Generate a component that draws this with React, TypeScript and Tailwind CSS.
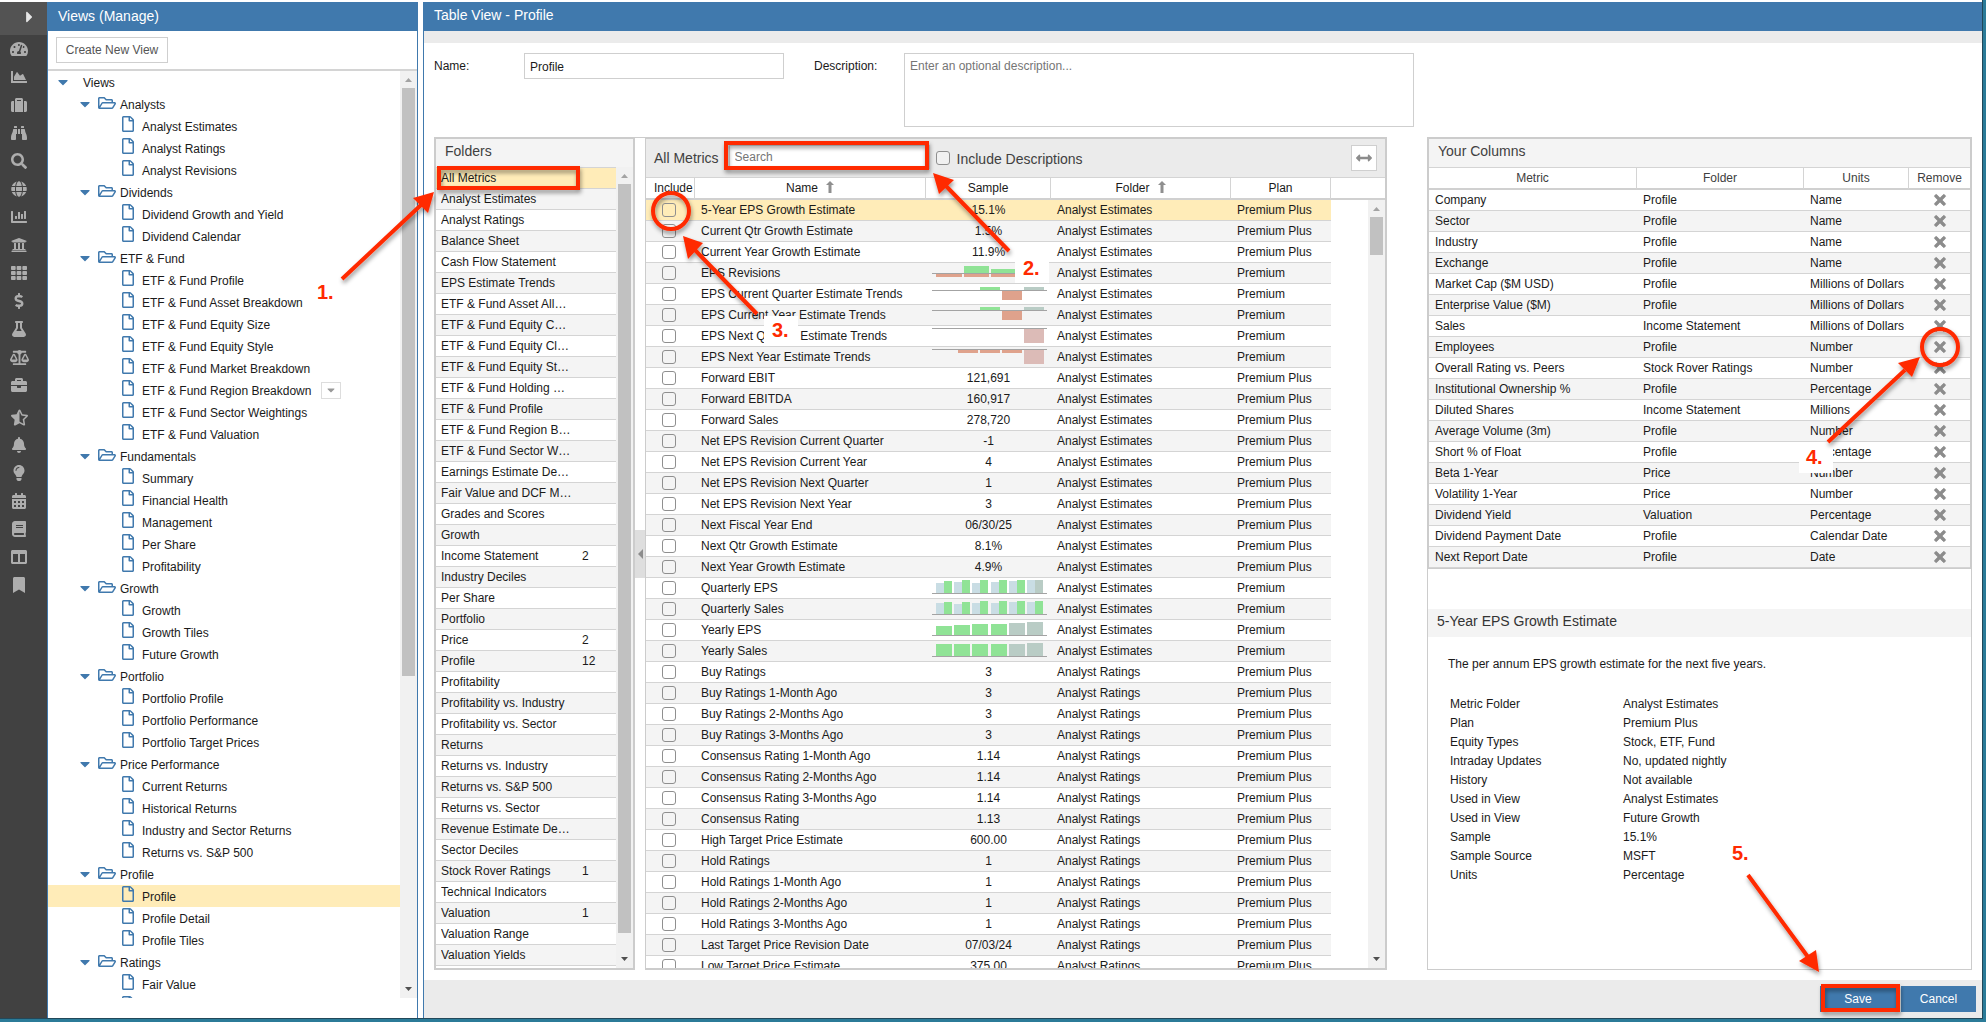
import { useState } from "react";
import type { ReactNode } from "react";
import {
    FaTachometerAlt,
    FaChartArea,
    FaSuitcase,
    FaBinoculars,
    FaSearch,
    FaGlobe,
    FaChartBar,
    FaUniversity,
    FaTh,
    FaDollarSign,
    FaFlask,
    FaBalanceScale,
    FaBriefcase,
    FaStarHalfAlt,
    FaBell,
    FaLightbulb,
    FaCalendarAlt,
    FaBook,
    FaColumns,
    FaBookmark,
    FaRegFolderOpen,
    FaRegFile,
    FaTimes,
    FaArrowsAltH,
    FaCaretDown,
    FaCaretRight,
} from "react-icons/fa";

const railIcons = [
    { label: "Dashboard", icon: <FaTachometerAlt size={18} /> },
    { label: "Chart", icon: <FaChartArea /> },
    { label: "Portfolios", icon: <FaSuitcase /> },
    { label: "Watchlists", icon: <FaBinoculars /> },
    { label: "Screeners", icon: <FaSearch /> },
    { label: "Markets", icon: <FaGlobe /> },
    { label: "Performance", icon: <FaChartBar /> },
    { label: "Institutions", icon: <FaUniversity /> },
    { label: "Grid", icon: <FaTh /> },
    { label: "Trading", icon: <FaDollarSign /> },
    { label: "Research", icon: <FaFlask /> },
    { label: "Rebalance", icon: <FaBalanceScale size={19} /> },
    { label: "Brokerage", icon: <FaBriefcase /> },
];

const railIconsLower = [
    { label: "Ratings", icon: <FaStarHalfAlt size={17} /> },
    { label: "Alerts", icon: <FaBell /> },
    { label: "Ideas", icon: <FaLightbulb /> },
    { label: "Calendar", icon: <FaCalendarAlt /> },
    { label: "Library", icon: <FaBook /> },
    { label: "Views", icon: <FaColumns /> },
    { label: "Bookmarks", icon: <FaBookmark /> },
];

const viewTree = [
    { name: "Analysts", views: ["Analyst Estimates", "Analyst Ratings", "Analyst Revisions"] },
    { name: "Dividends", views: ["Dividend Growth and Yield", "Dividend Calendar"] },
    {
        name: "ETF & Fund",
        views: [
            "ETF & Fund Profile",
            "ETF & Fund Asset Breakdown",
            "ETF & Fund Equity Size",
            "ETF & Fund Equity Style",
            "ETF & Fund Market Breakdown",
            "ETF & Fund Region Breakdown",
            "ETF & Fund Sector Weightings",
            "ETF & Fund Valuation",
        ],
    },
    { name: "Fundamentals", views: ["Summary", "Financial Health", "Management", "Per Share", "Profitability"] },
    { name: "Growth", views: ["Growth", "Growth Tiles", "Future Growth"] },
    { name: "Portfolio", views: ["Portfolio Profile", "Portfolio Performance", "Portfolio Target Prices"] },
    {
        name: "Price Performance",
        views: ["Current Returns", "Historical Returns", "Industry and Sector Returns", "Returns vs. S&P 500"],
    },
    { name: "Profile", views: ["Profile", "Profile Detail", "Profile Tiles"] },
    { name: "Ratings", views: ["Fair Value", ""] },
];

const folders: [string, number?][] = [
    ["All Metrics"],
    ["Analyst Estimates"],
    ["Analyst Ratings"],
    ["Balance Sheet"],
    ["Cash Flow Statement"],
    ["EPS Estimate Trends"],
    ["ETF & Fund Asset All…"],
    ["ETF & Fund Equity C…"],
    ["ETF & Fund Equity Cl…"],
    ["ETF & Fund Equity St…"],
    ["ETF & Fund Holding …"],
    ["ETF & Fund Profile"],
    ["ETF & Fund Region B…"],
    ["ETF & Fund Sector W…"],
    ["Earnings Estimate De…"],
    ["Fair Value and DCF M…"],
    ["Grades and Scores"],
    ["Growth"],
    ["Income Statement", 2],
    ["Industry Deciles"],
    ["Per Share"],
    ["Portfolio"],
    ["Price", 2],
    ["Profile", 12],
    ["Profitability"],
    ["Profitability vs. Industry"],
    ["Profitability vs. Sector"],
    ["Returns"],
    ["Returns vs. Industry"],
    ["Returns vs. S&P 500"],
    ["Returns vs. Sector"],
    ["Revenue Estimate De…"],
    ["Sector Deciles"],
    ["Stock Rover Ratings", 1],
    ["Technical Indicators"],
    ["Valuation", 1],
    ["Valuation Range"],
    ["Valuation Yields"],
];

const GREEN = "#90e396";
const BLUE = "#c9dde4";
const GREY = "#b9ccc5";
const ORANGE = "#dfa28c";
const PINK = "#dcbbb7";

// x, width, height (negative hangs below the axis), fill
type Bar = [number, number, number, string];

interface Spark {
    axis: number;
    bars: Bar[];
}

const pairX = [4, 22, 40, 59, 77, 95];

function pairs(left: number[], right: number[], lastFill: string): Bar[] {
    return pairX.flatMap((x, i): Bar[] => [
        [x, 8, left[i], BLUE],
        [x + 8, 8, right[i], i === 5 ? lastFill : GREEN],
    ]);
}

function years(heights: number[]): Bar[] {
    return heights.map((h, i): Bar => [pairX[i], 16, h, i > 3 ? GREY : GREEN]);
}

const sparks: Record<string, Spark> = {
    revisions: {
        axis: 10,
        bars: [
            [4, 26, -3, ORANGE],
            [32, 25, 7, GREEN],
            [32, 25, -3, ORANGE],
            [59, 25, 4, GREEN],
            [59, 25, -3, ORANGE],
        ],
    },
    quarterTrend: { axis: 6, bars: [[48, 20, 3, GREEN], [70, 20, -9, ORANGE], [92, 20, 3, GREY]] },
    yearTrend: { axis: 5, bars: [[48, 20, 3, GREEN], [70, 20, -9, ORANGE], [92, 20, 3, GREY]] },
    nextQuarter: { axis: 2, bars: [[92, 20, -14, PINK]] },
    nextYear: {
        axis: 2,
        bars: [[26, 20, -3, ORANGE], [48, 20, -3, ORANGE], [70, 20, -3, ORANGE], [92, 20, -14, PINK]],
    },
    quarterlyEps: { axis: 15, bars: pairs([10, 11, 10, 11, 12, 13], [12, 13, 13, 13, 13, 13], GREY) },
    quarterlySales: { axis: 15, bars: pairs([11, 10, 11, 11, 12, 12], [12, 12, 13, 13, 13, 13], GREEN) },
    yearlyEps: { axis: 15, bars: years([9, 10, 11, 11, 12, 13]) },
    yearlySales: { axis: 15, bars: years([12, 12, 12, 12, 12, 13]) },
};

interface Metric {
    name: string;
    sample?: string;
    spark?: string;
    folder: string;
    plan: string;
}

const est = (name: string, sample: string): Metric => ({ name, sample, folder: "Analyst Estimates", plan: "Premium Plus" });
const trend = (name: string, spark: string): Metric => ({ name, spark, folder: "Analyst Estimates", plan: "Premium" });
const rating = (name: string, sample: string): Metric => ({ name, sample, folder: "Analyst Ratings", plan: "Premium Plus" });

const metrics: Metric[] = [
    est("5-Year EPS Growth Estimate", "15.1%"),
    est("Current Qtr Growth Estimate", "1.5%"),
    est("Current Year Growth Estimate", "11.9%"),
    trend("EPS Revisions", "revisions"),
    trend("EPS Current Quarter Estimate Trends", "quarterTrend"),
    trend("EPS Current Year Estimate Trends", "yearTrend"),
    trend("EPS Next Quarter Estimate Trends", "nextQuarter"),
    trend("EPS Next Year Estimate Trends", "nextYear"),
    est("Forward EBIT", "121,691"),
    est("Forward EBITDA", "160,917"),
    est("Forward Sales", "278,720"),
    est("Net EPS Revision Current Quarter", "-1"),
    est("Net EPS Revision Current Year", "4"),
    est("Net EPS Revision Next Quarter", "1"),
    est("Net EPS Revision Next Year", "3"),
    est("Next Fiscal Year End", "06/30/25"),
    est("Next Qtr Growth Estimate", "8.1%"),
    est("Next Year Growth Estimate", "4.9%"),
    trend("Quarterly EPS", "quarterlyEps"),
    trend("Quarterly Sales", "quarterlySales"),
    trend("Yearly EPS", "yearlyEps"),
    trend("Yearly Sales", "yearlySales"),
    rating("Buy Ratings", "3"),
    rating("Buy Ratings 1-Month Ago", "3"),
    rating("Buy Ratings 2-Months Ago", "3"),
    rating("Buy Ratings 3-Months Ago", "3"),
    rating("Consensus Rating 1-Month Ago", "1.14"),
    rating("Consensus Rating 2-Months Ago", "1.14"),
    rating("Consensus Rating 3-Months Ago", "1.14"),
    rating("Consensus Rating", "1.13"),
    rating("High Target Price Estimate", "600.00"),
    rating("Hold Ratings", "1"),
    rating("Hold Ratings 1-Month Ago", "1"),
    rating("Hold Ratings 2-Months Ago", "1"),
    rating("Hold Ratings 3-Months Ago", "1"),
    rating("Last Target Price Revision Date", "07/03/24"),
    rating("Low Target Price Estimate", "375.00"),
];

const yourColumns = [
    ["Company", "Profile", "Name"],
    ["Sector", "Profile", "Name"],
    ["Industry", "Profile", "Name"],
    ["Exchange", "Profile", "Name"],
    ["Market Cap ($M USD)", "Profile", "Millions of Dollars"],
    ["Enterprise Value ($M)", "Profile", "Millions of Dollars"],
    ["Sales", "Income Statement", "Millions of Dollars"],
    ["Employees", "Profile", "Number"],
    ["Overall Rating vs. Peers", "Stock Rover Ratings", "Number"],
    ["Institutional Ownership %", "Profile", "Percentage"],
    ["Diluted Shares", "Income Statement", "Millions"],
    ["Average Volume (3m)", "Profile", "Number"],
    ["Short % of Float", "Profile", "Percentage"],
    ["Beta 1-Year", "Price", "Number"],
    ["Volatility 1-Year", "Price", "Number"],
    ["Dividend Yield", "Valuation", "Percentage"],
    ["Dividend Payment Date", "Profile", "Calendar Date"],
    ["Next Report Date", "Profile", "Date"],
];

const details = [
    ["Metric Folder", "Analyst Estimates"],
    ["Plan", "Premium Plus"],
    ["Equity Types", "Stock, ETF, Fund"],
    ["Intraday Updates", "No, updated nightly"],
    ["History", "Not available"],
    ["Used in View", "Analyst Estimates"],
    ["Used in View", "Future Growth"],
    ["Sample", "15.1%"],
    ["Sample Source", "MSFT"],
    ["Units", "Percentage"],
];

function Sparkline({ spark }: { spark: Spark }) {
    return (
        <svg width="116" height="20" className="block" shapeRendering="crispEdges">
            {spark.bars.map(([x, w, h, fill], i) => (
                <rect key={i} x={x} y={h > 0 ? spark.axis - h : spark.axis + 1} width={w} height={Math.abs(h)} fill={fill} />
            ))}
            <rect x="0" y={spark.axis} width="115" height="1" fill="#a3a3a3" />
        </svg>
    );
}

function Scrollbar({ thumb, className = "" }: { thumb: string; className?: string }) {
    return (
        <div className={`flex w-[17px] shrink-0 flex-col items-center bg-[#f1f1f1] ${className}`}>
            <svg width="17" height="17" viewBox="0 0 17 17" className="shrink-0">
                <path d="M5 11 L8.5 7 L12 11 Z" fill="#a3a3a3" />
            </svg>
            <div className={`w-[13px] bg-[#c1c1c1] ${thumb}`} />
            <svg width="17" height="17" viewBox="0 0 17 17" className="mt-auto shrink-0">
                <path d="M5 6 L12 6 L8.5 10 Z" fill="#505050" />
            </svg>
        </div>
    );
}

function SortArrow() {
    return (
        <svg width="8" height="13" viewBox="0 0 8 13" className="ml-2 inline-block align-[-2px]">
            <path d="M4 0 L8 4 H5.5 V12 H2.5 V4 H0 Z" fill="#8f8f8f" />
        </svg>
    );
}

function HeaderCell({ children, className = "text-center" }: { children?: ReactNode; className?: string }) {
    return <th className={`h-[22px] border-b-2 border-b-[#d0d0d0] bg-white py-0 pr-0 font-normal ${className}`}>{children}</th>;
}

function IconRail() {
    return (
        <nav className="w-[47px] shrink-0 bg-[#414141] text-[16px] text-[#adadad]">
            <button aria-label="Expand menu" className="flex h-[33px] w-full items-center justify-end bg-[#535353] pr-[13px] pb-1 text-[#e6e6e6]">
                <FaCaretRight size={18} className="w-[9px]" />
            </button>
            <div className="flex flex-col">
                {railIcons.map(({ label, icon }) => (
                    <button key={label} aria-label={label} className="flex h-7 w-[38px] items-center justify-center">
                        {icon}
                    </button>
                ))}
            </div>
            <div className="mt-1 flex flex-col">
                {railIconsLower.map(({ label, icon }) => (
                    <button key={label} aria-label={label} className="flex h-7 w-[38px] items-center justify-center">
                        {icon}
                    </button>
                ))}
            </div>
        </nav>
    );
}

function ViewsPanel() {
    return (
        <aside className="flex w-[371px] shrink-0 flex-col border-x border-[#4079ad]">
            <h2 className="h-[29px] shrink-0 bg-[#4079ad] pl-[10px] text-[14px] leading-[28px] text-white">Views (Manage)</h2>
            <div className="h-10 shrink-0 border-b-2 border-[#d4d4d4] pt-[6px] pl-2">
                <button className="h-[26px] w-28 border border-[#cfcfcf] bg-white text-[#555]">Create New View</button>
            </div>
            <div className="mb-5 flex min-h-0 flex-1">
                <ul className="min-w-0 flex-1 overflow-hidden">
                    <li className="flex h-[22px] items-center pt-0.5">
                        <FaCaretDown size={16} className="mb-0.5 ml-[7px] text-[#4079ad]" />
                        <span className="ml-3">Views</span>
                    </li>
                    {viewTree.map((group) => (
                        <li key={group.name}>
                            <div className="flex h-[22px] items-center pt-0.5">
                                <FaCaretDown size={16} className="mb-0.5 ml-[29px] text-[#4079ad]" />
                                <FaRegFolderOpen size={18} className="mr-1 mb-1 ml-[5px] text-[#4079ad]" />
                                <span>{group.name}</span>
                            </div>
                            <ul>
                                {group.views.map((view) => (
                                    <li
                                        key={view}
                                        className={`flex h-[22px] items-center pt-0.5 pl-[74px] ${group.name === "Profile" && view === "Profile" ? "bg-[#ffecb8]" : ""}`}
                                    >
                                        <FaRegFile size={16} className="mr-2 mb-[6px] w-3 text-[#4079ad]" />
                                        <span>{view}</span>
                                        {view === "ETF & Fund Region Breakdown" && (
                                            <button
                                                aria-label="View options"
                                                className="mb-0.5 ml-[10px] flex h-[17px] w-5 items-center justify-center border border-[#ddd] text-[#999]"
                                            >
                                                <FaCaretDown size={12} />
                                            </button>
                                        )}
                                    </li>
                                ))}
                            </ul>
                        </li>
                    ))}
                </ul>
                <Scrollbar thumb="h-[588px]" />
            </div>
        </aside>
    );
}

function FoldersPanel() {
    return (
        <section className="flex w-[201px] shrink-0 flex-col border-x-2 border-t border-b-2 border-[#ccc]">
            <h3 className="h-7 shrink-0 bg-[#f4f4f4] pl-[9px] text-[14px] leading-[25px] text-[#404040]">Folders</h3>
            <div className="flex min-h-0 flex-1">
                <ul className="min-w-0 flex-1 overflow-hidden border-t border-[#d4d4d4]">
                    {folders.map(([name, count], i) => (
                        <li
                            key={name}
                            className={`flex h-[21px] items-center border-b border-[#d4d4d4] pl-[5px] ${i === 0 ? "bg-[#ffecb8]" : i % 2 ? "bg-[#f4f4f4]" : ""}`}
                        >
                            <span className="w-[141px] shrink-0 truncate">{name}</span>
                            <span>{count}</span>
                        </li>
                    ))}
                </ul>
                <Scrollbar thumb="h-[749px]" />
            </div>
        </section>
    );
}

function MetricsPanel() {
    const [search, setSearch] = useState("");
    const cell = "h-[21px] border-b border-[#d4d4d4] py-0 pl-[6px] whitespace-nowrap";

    return (
        <section className="flex min-w-0 flex-1 flex-col border-t border-r-2 border-b-2 border-l border-[#ccc]">
            <div className="flex h-[39px] shrink-0 items-center border-b border-[#d4d4d4] bg-[#ebebeb] pr-2 pl-2 text-[#404040]">
                <h3 className="text-[14px]">All Metrics</h3>
                <input
                    aria-label="Search"
                    placeholder="Search"
                    value={search}
                    onChange={(e) => setSearch(e.target.value)}
                    className="mb-0.5 ml-[10px] h-[24px] w-[201px] border border-[#cfcfcf] bg-white px-[5px] outline-none placeholder:text-[#757575]"
                />
                <input
                    type="checkbox"
                    id="include-descriptions"
                    className="ml-[6px] size-[14px] appearance-none rounded-[3px] border border-[#8f8f8f] bg-[#f1f1f1]"
                />
                <label htmlFor="include-descriptions" className="ml-[7px] pt-0.5 text-[14px]">
                    Include Descriptions
                </label>
                <button aria-label="Expand width" className="ml-auto flex h-[26px] w-[26px] items-center justify-center border border-[#cfcfcf] bg-white text-[#8c8c8c]">
                    <FaArrowsAltH size={16} />
                </button>
            </div>
            <div className="relative min-h-0 flex-1 overflow-hidden">
                <table className="w-full table-fixed border-separate border-spacing-0">
                    <colgroup>
                        <col className="w-[49px]" />
                        <col className="w-[231px]" />
                        <col className="w-[125px]" />
                        <col className="w-[180px]" />
                        <col className="w-[100px]" />
                        <col />
                    </colgroup>
                    <thead>
                        <tr>
                            <HeaderCell className="border-r border-r-[#d4d4d4] pl-2 text-left">Include</HeaderCell>
                            <HeaderCell className="border-r border-r-[#d4d4d4] pl-0 text-center">
                                Name
                                <SortArrow />
                            </HeaderCell>
                            <HeaderCell className="border-r border-r-[#d4d4d4] pl-0 text-center">Sample</HeaderCell>
                            <HeaderCell className="border-r border-r-[#d4d4d4] pl-0 text-center">
                                Folder
                                <SortArrow />
                            </HeaderCell>
                            <HeaderCell className="border-r border-r-[#d4d4d4] pl-0 text-center">Plan</HeaderCell>
                            <HeaderCell />
                        </tr>
                    </thead>
                    <tbody>
                        {metrics.map((metric, i) => {
                            const bg = i === 0 ? "bg-[#ffecb8]" : i % 2 ? "bg-[#f4f4f4]" : "";
                            return (
                                <tr key={metric.name}>
                                    <td className={`h-[21px] border-b border-[#d4d4d4] p-0 ${bg}`}>
                                        <input
                                            type="checkbox"
                                            aria-label={`Include ${metric.name}`}
                                            className="ml-4 block size-[14px] appearance-none rounded-[3px] border border-[#8f8f8f]"
                                        />
                                    </td>
                                    <td className={`${cell} ${bg}`}>{metric.name}</td>
                                    <td className={metric.spark ? `${cell} ${bg}` : `h-[21px] border-b border-[#d4d4d4] p-0 text-center ${bg}`}>
                                        {metric.spark ? <Sparkline spark={sparks[metric.spark]} /> : metric.sample}
                                    </td>
                                    <td className={`${cell} ${bg}`}>{metric.folder}</td>
                                    <td className={`${cell} ${bg}`}>{metric.plan}</td>
                                </tr>
                            );
                        })}
                    </tbody>
                </table>
                <Scrollbar thumb="h-[38px]" className="absolute top-[22px] right-0 bottom-0" />
            </div>
        </section>
    );
}

function YourColumns() {
    const cell = "h-[21px] border-b border-[#d4d4d4] py-0 pl-[6px] whitespace-nowrap";

    return (
        <section className="flex w-[545px] shrink-0 flex-col border border-[#ccc]">
            <div className="border border-[#ccc]">
                <h3 className="h-[28px] bg-[#f4f4f4] pl-[9px] text-[14px] leading-[25px] text-[#404040]">Your Columns</h3>
                <table className="w-full table-fixed border-separate border-spacing-0 border-t border-[#d4d4d4]">
                    <colgroup>
                        <col className="w-[208px]" />
                        <col className="w-[167px]" />
                        <col className="w-[105px]" />
                        <col />
                    </colgroup>
                    <thead className="text-[#404040]">
                        <tr>
                            <HeaderCell className="border-r border-r-[#d4d4d4] pl-0 text-center">Metric</HeaderCell>
                            <HeaderCell className="border-r border-r-[#d4d4d4] pl-0 text-center">Folder</HeaderCell>
                            <HeaderCell className="border-r border-r-[#d4d4d4] pl-0 text-center">Units</HeaderCell>
                            <HeaderCell className="pl-0 text-center">Remove</HeaderCell>
                        </tr>
                    </thead>
                    <tbody>
                        {yourColumns.map(([metric, folder, units], i) => (
                            <tr key={metric} className={i % 2 ? "bg-[#f4f4f4]" : ""}>
                                <td className={cell}>{metric}</td>
                                <td className={cell}>{folder}</td>
                                <td className={cell}>{units}</td>
                                <td className="h-[21px] border-b border-[#d4d4d4] p-0">
                                    <button aria-label={`Remove ${metric}`} className="mx-auto block text-[#8c8c8c]">
                                        <FaTimes size={16} stroke="currentColor" strokeWidth={24} />
                                    </button>
                                </td>
                            </tr>
                        ))}
                    </tbody>
                </table>
            </div>
            <div className="mt-10">
                <h3 className="h-7 bg-[#f4f4f4] pl-[9px] text-[14px] leading-[24px] text-[#333]">5-Year EPS Growth Estimate</h3>
                <p className="mt-[18px] pl-5 leading-[18px]">The per annum EPS growth estimate for the next five years.</p>
                <dl className="mt-[22px] grid grid-cols-[173px_1fr] pl-[22px] leading-[19px]">
                    {details.map(([label, value], i) => (
                        <div key={i} className="contents">
                            <dt>{label}</dt>
                            <dd>{value}</dd>
                        </div>
                    ))}
                </dl>
            </div>
        </section>
    );
}

function Callouts() {
    return (
        <svg className="pointer-events-none absolute top-0 left-0" width="1986" height="1022" viewBox="0 0 1986 1022">
            <defs>
                <filter id="callout-shadow" x="-20%" y="-20%" width="150%" height="150%">
                    <feDropShadow dx="1" dy="3" stdDeviation="2" floodColor="#000" floodOpacity="0.4" />
                </filter>
            </defs>
            <g fill="#fff">
                <rect x="1015" y="254" width="34" height="29" />
                <rect x="764" y="316" width="34" height="29" />
                <rect x="1799" y="443" width="34" height="30" />
            </g>
            <g filter="url(#callout-shadow)" fill="#ff2a00">
                <g fill="none" stroke="#ff2a00" strokeWidth="4">
                    <rect x="439" y="168" width="139" height="20" />
                    <rect x="726" y="143" width="201" height="25" />
                    <rect x="1823" y="986" width="75" height="24" />
                    <circle cx="671" cy="211" r="18" />
                    <circle cx="1940" cy="347" r="18" />
                    <path d="M342 279 L421 205 M1009 251 L946 186 M757 314 L694 249 M1828 442 L1905 370 M1748 875 L1808 957" />
                </g>
                <path d="M434 192 L413 198 L428 213 Z" />
                <path d="M933 173 L954 180 L939 194 Z" />
                <path d="M683 236 L703 243 L688 259 Z" />
                <path d="M1920 357 L1898 363 L1912 377 Z" />
                <path d="M1819 972 L1799 961 L1816 950 Z" />
            </g>
            <g fill="#ff2a00" fontFamily="Liberation Sans, Arial, sans-serif" fontSize="20" fontWeight="700">
                <text x="317" y="299">1.</text>
                <text x="1023" y="275">2.</text>
                <text x="772" y="337">3.</text>
                <text x="1806" y="464">4.</text>
                <text x="1732" y="860">5.</text>
            </g>
        </svg>
    );
}

export default function App() {
    const [name, setName] = useState("Profile");
    const [description, setDescription] = useState("");

    return (
        <div className="relative h-screen overflow-hidden border-r-[3px] border-b-[3px] border-[#2b7b98] bg-white font-['Liberation_Sans',Arial,sans-serif] text-[12px] leading-[14px] text-[#1a1a1a]">
            <div className="flex h-full border-r border-b border-[#22485a] pt-[2px]">
                <IconRail />
                <ViewsPanel />
                <main className="ml-[5px] flex min-w-0 flex-1 flex-col border-l border-[#4079ad]">
                    <h1 className="h-[29px] shrink-0 bg-[#4079ad] pl-[10px] text-[14px] leading-[27px] text-white">Table View - Profile</h1>
                    <div className="h-3 shrink-0 bg-[#ebebeb]" />
                    <form className="flex shrink-0 items-start px-[10px] py-[10px]">
                        <label htmlFor="view-name" className="w-[90px] pt-[6px]">
                            Name:
                        </label>
                        <input
                            id="view-name"
                            value={name}
                            onChange={(e) => setName(e.target.value)}
                            className="h-[26px] w-[260px] border border-[#cfcfcf] px-[5px] pt-px outline-none"
                        />
                        <label htmlFor="view-description" className="ml-[30px] w-[90px] pt-[6px]">
                            Description:
                        </label>
                        <textarea
                            id="view-description"
                            placeholder="Enter an optional description..."
                            value={description}
                            onChange={(e) => setDescription(e.target.value)}
                            className="h-[74px] w-[510px] resize-none border border-[#cfcfcf] px-[5px] py-[5px] outline-none placeholder:text-[#757575]"
                        />
                    </form>
                    <div className="flex min-h-0 flex-1 gap-10 px-[10px] pb-[10px]">
                        <div className="flex min-w-0 flex-1 border-t border-[#ccc]">
                            <FoldersPanel />
                            <div className="flex w-[10px] shrink-0 flex-col justify-center">
                                <button aria-label="Collapse folders" className="flex h-12 w-[10px] items-center justify-end bg-[#dedede]">
                                    <svg width="8" height="10" viewBox="0 0 8 10">
                                        <path d="M6 0 V10 L1 5 Z" fill="#8c8c8c" />
                                    </svg>
                                </button>
                            </div>
                            <MetricsPanel />
                        </div>
                        <YourColumns />
                    </div>
                    <footer className="flex h-[38px] shrink-0 items-center justify-end gap-[5px] bg-[#ebebeb] pr-[6px] text-white">
                        <button className="h-[26px] w-[76px] bg-[#4079ad]">Save</button>
                        <button className="h-[26px] w-[75px] bg-[#4079ad]">Cancel</button>
                    </footer>
                </main>
            </div>
            <Callouts />
        </div>
    );
}
